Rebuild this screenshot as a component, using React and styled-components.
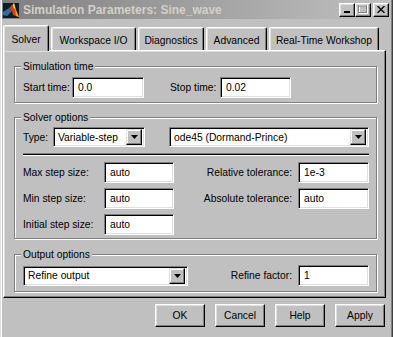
import React from "react";
import styled, { createGlobalStyle } from "styled-components";

const GlobalStyle = createGlobalStyle`
  html, body {
    margin: 0;
    padding: 0;
    background: #c0c0c0;
  }
  body {
    font-family: "Liberation Sans", Arial, sans-serif;
    font-size: 10.3px;
    color: #000;
  }
`;

const Window = styled.div`
  width: 393px;
  height: 337px;
  box-sizing: border-box;
  padding: 0 2px;
  background: #c0c0c0;
  box-shadow: inset 1px 0 0 #dfdfdf, inset 2px 0 0 #fff, inset -1px 0 0 #404040,
    inset -2px 0 0 #808080;
  display: flex;
  flex-direction: column;
  overflow: hidden;
`;

const TitleBar = styled.div`
  height: 19px;
  display: flex;
  align-items: center;
  padding: 0 2px 0 1px;
  background: linear-gradient(to right, #808080, #c0c0c0);
`;

const Caption = styled.span`
  flex: 1;
  margin-left: 4px;
  font-size: 12px;
  font-weight: bold;
  color: #d4d0c8;
  white-space: nowrap;
`;

const CapButton = styled.div`
  width: 16px;
  height: 14px;
  box-sizing: border-box;
  margin-left: ${(p) => p.$ml || 0}px;
  background: #c0c0c0;
  border-top: 1px solid #fff;
  border-left: 1px solid #fff;
  border-right: 1px solid #000;
  border-bottom: 1px solid #000;
  box-shadow: inset -1px -1px 0 #808080, inset 1px 1px 0 #dfdfdf;
  display: flex;
  align-items: center;
  justify-content: center;
`;

const TabStrip = styled.div`
  height: 32px;
  margin-bottom: -1px;
  padding-left: 1px;
  display: flex;
  align-items: flex-end;
  gap: 2px;
`;

const Tab = styled.div`
  position: relative;
  z-index: ${(p) => (p.$active ? 2 : 0)};
  box-sizing: border-box;
  width: ${(p) => p.$w}px;
  height: ${(p) => (p.$active ? 26 : 23)}px;
  margin-bottom: ${(p) => (p.$active ? 0 : 1)}px;
  padding-top: 2px;
  background: #c0c0c0;
  border-top: 1px solid #fff;
  border-left: 1px solid #fff;
  border-right: 1px solid #000;
  border-radius: 2px 2px 0 0;
  box-shadow: inset -1px 0 0 #808080, inset 1px 1px 0 #dfdfdf;
  display: flex;
  align-items: center;
  justify-content: center;
  white-space: nowrap;
`;

const Panel = styled.div`
  position: relative;
  z-index: 1;
  width: 383px;
  height: 248px;
  margin-left: 1px;
  box-sizing: border-box;
  padding: 9px 0 0 10px;
  border-top: 1px solid #fff;
  border-left: 1px solid #fff;
  border-right: 1px solid #000;
  border-bottom: 1px solid #000;
  box-shadow: inset -1px -1px 0 #808080, inset 1px 1px 0 #dfdfdf;
  display: flex;
  flex-direction: column;
`;

const Group = styled.fieldset`
  width: 363px;
  min-width: 0;
  box-sizing: border-box;
  margin: ${(p) => p.$mt || 0}px 0 0 0;
  padding: ${(p) => p.$pt}px 7px ${(p) => p.$pb}px 8px;
  border: 1px solid #808080;
  box-shadow: inset 1px 1px 0 #fff, 1px 1px 0 #fff;
  display: flex;
  flex-direction: column;
`;

const Legend = styled.legend`
  margin-left: -2px;
  padding: 0 2px;
  line-height: 13px;
  background: #c0c0c0;
`;

const Row = styled.div`
  display: flex;
  align-items: center;
  margin-top: ${(p) => p.$mt || 0}px;
`;

const Label = styled.span`
  width: ${(p) => p.$w}px;
  margin-left: ${(p) => p.$ml || 0}px;
  flex: none;
  white-space: nowrap;
`;

const RightLabel = styled.span`
  flex: 1;
  text-align: right;
  padding-right: 6px;
  white-space: nowrap;
`;

const TextBox = styled.input`
  width: ${(p) => p.$w}px;
  height: 21px;
  box-sizing: border-box;
  margin: 0;
  padding: 0 0 0 5px;
  font: inherit;
  color: #000;
  background: #fff;
  border-top: 1px solid #808080;
  border-left: 1px solid #808080;
  border-right: 1px solid #fff;
  border-bottom: 1px solid #fff;
  box-shadow: inset 1px 1px 0 #000, inset -1px -1px 0 #dfdfdf;
  outline: none;
`;

const Combo = styled.div`
  width: ${(p) => p.$w}px;
  height: 20px;
  margin-left: ${(p) => p.$ml || 0}px;
  flex: none;
  box-sizing: border-box;
  padding: 2px;
  background: #fff;
  border-top: 1px solid #808080;
  border-left: 1px solid #808080;
  border-right: 1px solid #fff;
  border-bottom: 1px solid #fff;
  box-shadow: inset 1px 1px 0 #000, inset -1px -1px 0 #dfdfdf;
  display: flex;
  align-items: center;
`;

const ComboText = styled.span`
  flex: 1;
  padding-left: 2px;
  white-space: nowrap;
  overflow: hidden;
`;

const DropButton = styled.div`
  width: 16px;
  height: 16px;
  box-sizing: border-box;
  background: #c0c0c0;
  border-top: 1px solid #dfdfdf;
  border-left: 1px solid #dfdfdf;
  border-right: 1px solid #000;
  border-bottom: 1px solid #000;
  box-shadow: inset -1px -1px 0 #808080, inset 1px 1px 0 #fff;
  display: flex;
  align-items: center;
  justify-content: center;
`;

const Divider = styled.div`
  height: 1px;
  margin: 6px 0;
  background: #000;
  border-top: 1px solid #808080;
  border-bottom: 1px solid #fff;
`;

const ButtonRow = styled.div`
  display: flex;
  justify-content: flex-end;
  gap: 10px;
  margin-top: 6px;
  padding-right: 6px;
`;

const Button = styled.div`
  width: 50px;
  height: 23px;
  box-sizing: border-box;
  background: #c0c0c0;
  border-top: 1px solid #fff;
  border-left: 1px solid #fff;
  border-right: 1px solid #000;
  border-bottom: 1px solid #000;
  box-shadow: inset -1px -1px 0 #808080, inset 1px 1px 0 #dfdfdf;
  display: flex;
  align-items: center;
  justify-content: center;
`;

const Arrow = () => (
  <svg width="7" height="4" viewBox="0 0 7 4">
    <path d="M0 0h7L3.5 4z" fill="#000" />
  </svg>
);

const Dropdown = ({ w, ml, children }) => (
  <Combo $w={w} $ml={ml}>
    <ComboText>{children}</ComboText>
    <DropButton>
      <Arrow />
    </DropButton>
  </Combo>
);

const AppIcon = () => (
  <svg width="16" height="16" viewBox="0 0 16 16">
    <rect x="0" y="1" width="16" height="15" fill="#0c1c2c" />
    <path d="M0 10 L6 6 L9 9 L4 14 L0 13 Z" fill="#2f6f9f" />
    <path d="M6 6 L11 1 L13 8 L16 15 L10 13 L9 9 Z" fill="#d8400c" />
    <path d="M11 1 L13 8 L16 15 L13 14 L12 7 Z" fill="#f4a000" />
    <path d="M10 3 L11 1 L12 6 L11 7 Z" fill="#fff06a" />
  </svg>
);

export default function App() {
  return (
    <>
      <GlobalStyle />
      <Window>
        <TitleBar>
          <AppIcon />
          <Caption>Simulation Parameters: Sine_wave</Caption>
          <CapButton>
            <svg width="8" height="7" viewBox="0 0 8 7">
              <rect x="1" y="5" width="6" height="2" fill="#000" />
            </svg>
          </CapButton>
          <CapButton>
            <svg width="10" height="9" viewBox="0 0 10 9">
              <rect x="1.5" y="0.5" width="8" height="8" fill="none" stroke="#fff" />
              <rect x="0.5" y="-0.5" width="8" height="8" fill="none" stroke="#808080" />
              <rect x="0.5" y="0.5" width="8" height="1" fill="#808080" />
            </svg>
          </CapButton>
          <CapButton $ml={2}>
            <svg width="8" height="7" viewBox="0 0 8 7">
              <path d="M0.5 0 L7.5 7 M7.5 0 L0.5 7" stroke="#000" strokeWidth="1.3" />
            </svg>
          </CapButton>
        </TitleBar>

        <TabStrip>
          <Tab $active $w={46}>Solver</Tab>
          <Tab $w={85}>Workspace I/O</Tab>
          <Tab $w={66}>Diagnostics</Tab>
          <Tab $w={61}>Advanced</Tab>
          <Tab $w={110}>Real-Time Workshop</Tab>
        </TabStrip>

        <Panel>
          <Group $pt={4} $pb={4}>
            <Legend>Simulation time</Legend>
            <Row>
              <Label $w={49}>Start time:</Label>
              <TextBox $w={72} defaultValue="0.0" readOnly />
              <Label $w={50} $ml={26}>Stop time:</Label>
              <TextBox $w={71} defaultValue="0.02" readOnly />
            </Row>
          </Group>

          <Group $mt={8} $pt={3} $pb={3}>
            <Legend>Solver options</Legend>
            <Row>
              <Label $w={30}>Type:</Label>
              <Dropdown w={92}>Variable-step</Dropdown>
              <Dropdown w={200} ml={24}>ode45 (Dormand-Prince)</Dropdown>
            </Row>
            <Divider />
            <Row>
              <Label $w={81}>Max step size:</Label>
              <TextBox $w={70} defaultValue="auto" readOnly />
              <RightLabel>Relative tolerance:</RightLabel>
              <TextBox $w={71} defaultValue="1e-3" readOnly />
            </Row>
            <Row $mt={5}>
              <Label $w={81}>Min step size:</Label>
              <TextBox $w={70} defaultValue="auto" readOnly />
              <RightLabel>Absolute tolerance:</RightLabel>
              <TextBox $w={71} defaultValue="auto" readOnly />
            </Row>
            <Row $mt={5}>
              <Label $w={81}>Initial step size:</Label>
              <TextBox $w={70} defaultValue="auto" readOnly />
            </Row>
          </Group>

          <Group $mt={9} $pt={4} $pb={5}>
            <Legend>Output options</Legend>
            <Row>
              <Dropdown w={165}>Refine output</Dropdown>
              <RightLabel>Refine factor:</RightLabel>
              <TextBox $w={71} defaultValue="1" readOnly />
            </Row>
          </Group>
        </Panel>

        <ButtonRow>
          <Button>OK</Button>
          <Button>Cancel</Button>
          <Button>Help</Button>
          <Button>Apply</Button>
        </ButtonRow>
      </Window>
    </>
  );
}
